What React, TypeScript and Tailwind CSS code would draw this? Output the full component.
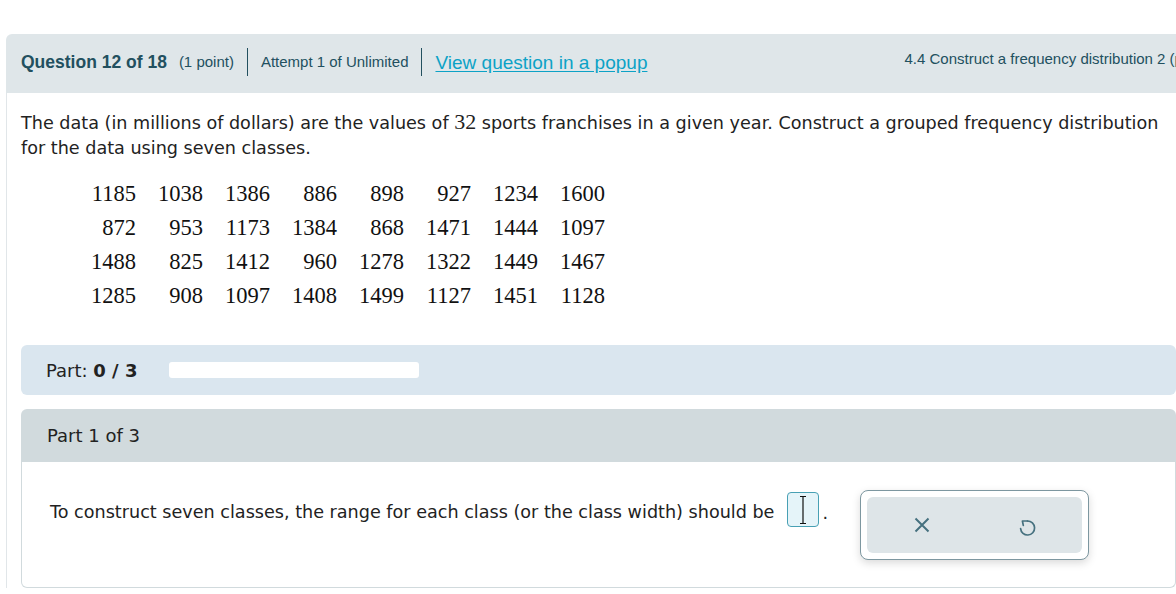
import React from "react";

const rows = [
  [1185, 1038, 1386, 886, 898, 927, 1234, 1600],
  [872, 953, 1173, 1384, 868, 1471, 1444, 1097],
  [1488, 825, 1412, 960, 1278, 1322, 1449, 1467],
  [1285, 908, 1097, 1408, 1499, 1127, 1451, 1128],
];

const sans = { fontFamily: '"DejaVu Sans", Verdana, sans-serif' };

export default function App() {
  return (
    <div className="w-[1176px] h-[594px] bg-white overflow-hidden">
      <div className="pt-[34px] pl-[6px] w-[1200px]">
        {/* Header */}
        <div className="h-[59px] bg-[#dfe6e9] rounded-tl-md flex items-start font-['Liberation_Sans',Arial,sans-serif] text-[#22505f] whitespace-nowrap">
          <div className="flex items-center h-[30px] mt-[13px] pl-[15px] shrink-0">
            <span className="text-[17.5px] font-bold">Question 12 of 18</span>
            <span className="text-[15px] ml-[12px]">(1 point)</span>
            <span className="w-px h-[28px] bg-[#22505f] mx-[13px]" />
            <span className="text-[15px]">Attempt 1 of Unlimited</span>
            <span className="w-px h-[28px] bg-[#22505f] mx-[13px]" />
            <span className="text-[19px] text-[#0ca2c6] underline underline-offset-2 mt-[3px]">View question in a popup</span>
          </div>
          <div className="ml-[257px] mt-[14px] text-[15px] shrink-0">4.4 Construct a frequency distribution 2 (practice)</div>
        </div>
        {/* Body */}
        <div className="border-l border-[#e1e6e9] pl-[14px] text-[#222]" style={sans}>
          <p className="pt-[18px] text-[17.6px] leading-[25px] w-[1150px]">
            The data (in millions of dollars) are the values of{" "}
            <span className="font-['Liberation_Serif',serif] text-[22px] leading-[20px]">32</span> sports franchises in a given year. Construct a grouped frequency distribution for the data using seven classes.
          </p>
          <div className="mt-[16px] ml-[48px] grid grid-cols-[repeat(8,67px)] font-['Liberation_Serif',serif] text-[22.5px] text-[#111]">
            {rows.flat().map((n, i) => (
              <div key={i} className="h-[34px] leading-[34px] text-right">
                {n}
              </div>
            ))}
          </div>
          {/* Part bar */}
          <div className="mt-[32px] h-[50px] w-[1155px] bg-[#dae6ef] rounded-md flex items-center pl-[25px] text-[18px]">
            <span>
              Part: <b>0 / 3</b>
            </span>
            <div className="ml-[32px] w-[250px] h-[16px] bg-white rounded-[3px]" />
          </div>
          {/* Part 1 */}
          <div className="mt-[14px] w-[1155px]">
            <div className="h-[53px] bg-[#d1dadd] rounded-t-md flex items-center pl-[26px] text-[18px]">Part 1 of 3</div>
            <div className="h-[126px] border border-t-0 border-[#d1dadd] rounded-b-md flex items-start pl-[28px] pt-[28px]">
              <div className="flex items-center mt-[2px] text-[17.6px]">
                <span className="mt-[5px]">To construct seven classes, the range for each class (or the class width) should be</span>
                <span className="ml-[13px] w-[32px] h-[35px] bg-[#e5f4f9] border-[1.5px] border-[#48a0b4] rounded-[4px] flex items-center justify-center">
                  <svg width="10" height="30" viewBox="0 0 10 30">
                    <path d="M2 1.5h6M5 1.5v27M2 28.5h6" stroke="#111" strokeWidth="1.2" fill="none" />
                  </svg>
                </span>
                <span className="ml-[3px] mt-[8px]">.</span>
              </div>
              <div className="ml-[32px] w-[229px] h-[70px] border border-[#7d97a0] rounded-lg shadow-[0_3px_8px_rgba(0,0,0,0.15)] p-[6px] bg-white">
                <div className="w-full h-full bg-[#dee5e8] rounded-md flex items-center">
                  <div className="w-[107px] flex justify-center pl-[2px]">
                    <svg width="16" height="16" viewBox="0 0 16 16">
                      <path d="M1.5 1.5l13 13M14.5 1.5l-13 13" stroke="#46717f" strokeWidth="2" fill="none" />
                    </svg>
                  </div>
                  <div className="w-[107px] flex justify-center pt-[4px]">
                    <svg width="18" height="19" viewBox="0 0 18 19">
                      <path d="M8.5 3H3.4L4.3 7.4" stroke="#46717f" strokeWidth="1.7" fill="none" strokeLinejoin="round" strokeLinecap="round" />
                      <path d="M8.5 3A7 7 0 1 1 1.6 10.6" stroke="#46717f" strokeWidth="1.7" fill="none" strokeLinecap="round" />
                    </svg>
                  </div>
                </div>
              </div>
            </div>
          </div>
        </div>
      </div>
    </div>
  );
}
